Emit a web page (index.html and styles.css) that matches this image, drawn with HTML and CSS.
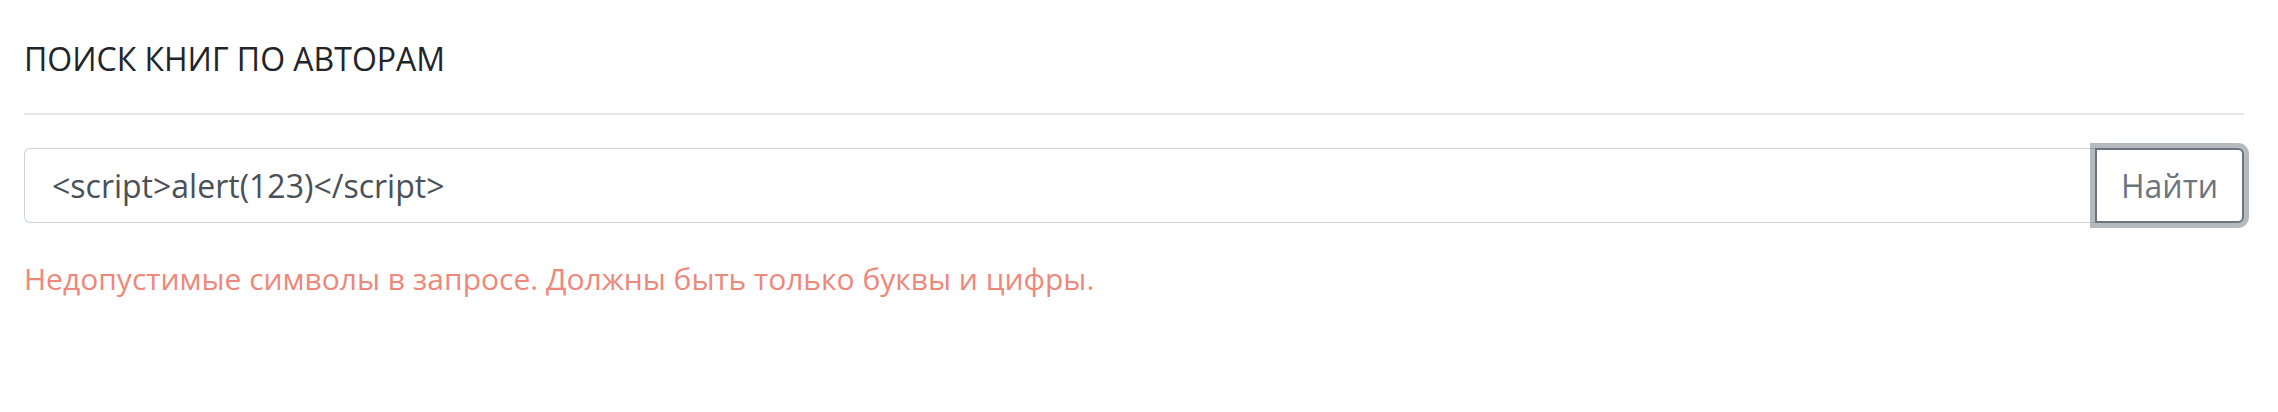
FILE: index.html
```html
<!DOCTYPE html>
<html lang="ru">
<head>
  <meta charset="UTF-8" />
  <meta name="viewport" content="width=device-width, initial-scale=1.0" />
  <title>Поиск книг по авторам</title>
  <link rel="stylesheet" href="styles.css">
</head>
<body>
  <main class="page">
    <h1 class="title">ПОИСК КНИГ ПО АВТОРАМ</h1>

    <form class="search" onsubmit="return false">
      <div class="input-group">
        <input class="search-input" type="text" name="q" value="<script>alert(123)</script>">
        <button class="btn-find" type="submit">Найти</button>
      </div>
      <p class="error">Недопустимые символы в запросе. Должны быть только буквы и цифры.</p>
    </form>
  </main>
</body>
</html>
```

FILE: styles.css
```css
:root{
  --text:#212529;
  --muted:#6c757d;
  --input-text:#495057;
  --border:#ced4da;
  --danger:#ee887a;
  --rule:#e5e5e5;
}
*{box-sizing:border-box}
body{margin:0;font-family:'Open Sans',sans-serif;color:var(--text);background:#fff}
.page{padding:0 34px 0 24px}
.title{font-size:32px;font-weight:400;line-height:38px;margin:0;padding:40px 0 35px;border-bottom:2px solid var(--rule)}
.search{padding-top:33px}
.input-group{display:flex;align-items:stretch}
.search-input{flex:1;height:75px;padding:0 27px;font-family:inherit;font-size:32px;color:var(--input-text);border:1.5px solid var(--border);border-right:none;border-radius:6px 0 0 6px;outline:none;background:#fff}
.btn-find{width:149px;font-family:inherit;font-size:32px;color:var(--muted);background:#fff;border:2px solid var(--muted);border-radius:0 6px 6px 0;box-shadow:0 0 0 5px rgba(108,117,125,.5);cursor:pointer}
.error{margin:36px 0 0;font-size:30px;line-height:40px;color:var(--danger)}
```
